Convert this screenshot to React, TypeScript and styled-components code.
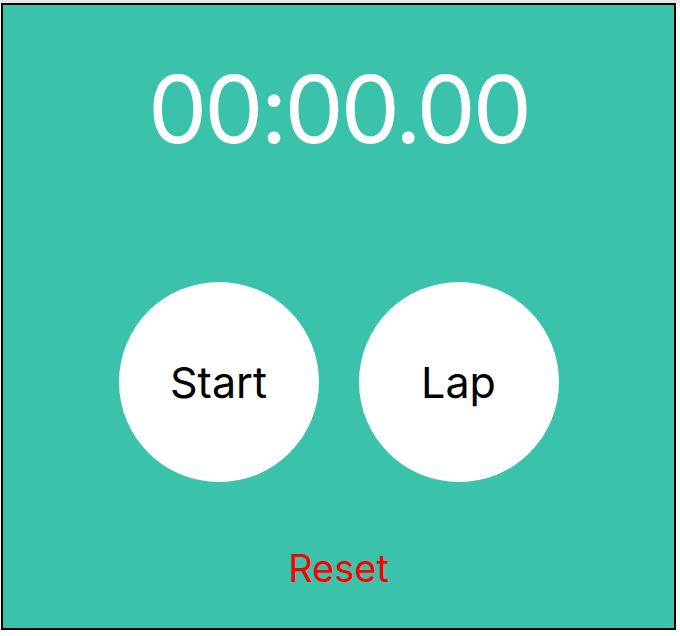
import React from 'react';
import styled, {createGlobalStyle} from "styled-components";

const GlobalStyle = createGlobalStyle`
    html, body {
        margin: 0;
        padding: 0;
        background: #ffffff;
    }

    body {
        border-top: 3px solid #e6e6e6; // Полоска сверху, как в скриншоте
        font-family: Inter, "Noto Sans", sans-serif;
    }
`

const Stopwatch = styled.div`
    box-sizing: border-box;
    width: 675px;
    height: 627px;
    margin-left: 1px;
    border: 2px solid #000000;
    background-color: #3bc2ab;
    display: flex;
    flex-direction: column;
    align-items: center;
    padding-top: 57px;
`

const Time = styled.div`
    color: #ffffff;
    font-size: 94px;
    line-height: 1;
    letter-spacing: -3px;
`

const Buttons = styled.div`
    display: flex;
    gap: 40px;
    margin-top: 126px;
`

const RoundButton = styled.button`
    width: 200px;
    height: 200px;
    border: none;
    border-radius: 50%;
    background: #ffffff;
    color: #000000;
    font-family: inherit;
    font-size: 43px;
    display: flex;
    align-items: center;
    justify-content: center;
    padding: 0;
    cursor: pointer;
`

const ResetButton = styled.button`
    margin-top: 67px;
    border: none;
    background: none;
    padding: 0;
    color: #ff0000;
    font-family: inherit;
    font-size: 38px;
    line-height: 1;
    cursor: pointer;
`

export default function App() {
    return (
        <>
            <GlobalStyle/>
            <Stopwatch>
                <Time>00:00.00</Time>
                <Buttons>
                    <RoundButton>Start</RoundButton>
                    <RoundButton>Lap</RoundButton>
                </Buttons>
                <ResetButton>Reset</ResetButton>
            </Stopwatch>
        </>
    );
}
